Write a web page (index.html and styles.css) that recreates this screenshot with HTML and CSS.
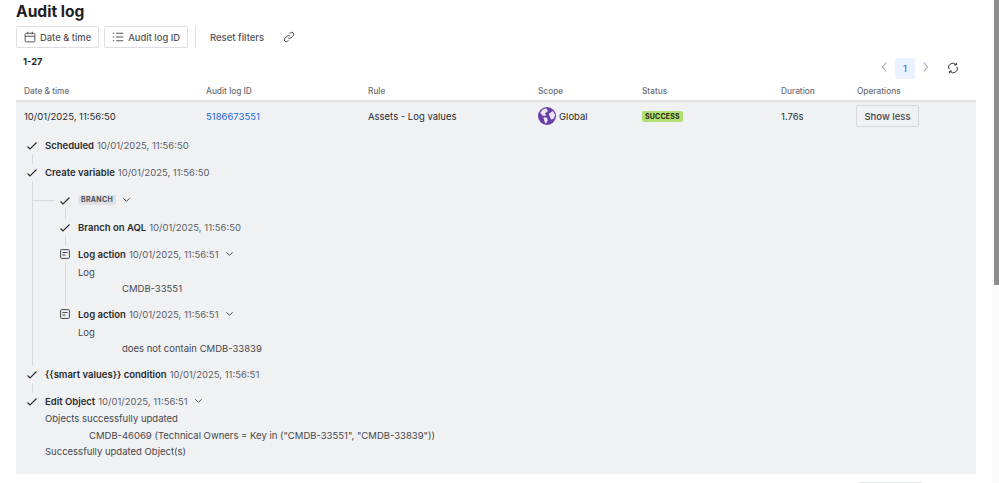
FILE: index.html
```html
<!DOCTYPE html>
<html lang="en">
<head>
<meta charset="utf-8">
<title>Audit log</title>
<link rel="stylesheet" href="styles.css">
</head>
<body>
<div class="scrollbar"><div class="thumb"></div></div>
<main class="page">
  <h1 class="title">Audit log</h1>
  <div class="filters">
    <button class="filter"><svg class="ico" viewBox="0 0 16 16"><rect x="1.500" y="3" width="13" height="11.500" rx="1.500"/><path d="M1.500 7h13M5 1v3.500M11 1v3.500"/></svg>Date &amp; time</button>
    <button class="filter"><svg class="ico" viewBox="0 0 16 16"><path d="M5.500 3H15M5.500 8H15M5.500 13H15M1 3h2M1 8h2M1 13h2"/></svg>Audit log ID</button>
    <span class="divider"></span>
    <span class="reset">Reset filters</span>
    <svg class="ico link" viewBox="0 0 16 16"><path d="M6.800 9.200a2.600 2.600 0 0 0 3.700 0l3-3a2.600 2.600 0 0 0-3.700-3.700l-1 1M9.200 6.800a2.600 2.600 0 0 0-3.700 0l-3 3a2.600 2.600 0 0 0 3.700 3.700l1-1"/></svg>
  </div>
  <div class="toolbar">
    <span class="count">1-27</span>
    <div class="pager">
      <svg class="chev" viewBox="0 0 10 14"><path d="M7 2 2.500 7 7 12"/></svg>
      <span class="pagenum">1</span>
      <svg class="chev" viewBox="0 0 10 14"><path d="M3 2l4.500 5L3 12"/></svg>
      <svg class="refresh" viewBox="0 0 16 16"><path d="M2.500 9.500a5.700 5.700 0 0 1 9.500-6M13.500 6.500a5.700 5.700 0 0 1-9.500 6M12.500 1v3h-3M3.500 15v-3h3"/></svg>
    </div>
  </div>
  <div class="cols head">
    <span>Date &amp; time</span><span>Audit log ID</span><span>Rule</span><span>Scope</span><span>Status</span><span>Duration</span><span>Operations</span>
  </div>
  <section class="expanded">
    <div class="cols row">
      <span>10/01/2025, 11:56:50</span>
      <a class="idlink">5186673551</a>
      <span>Assets - Log values</span>
      <span class="scope"><svg class="globe" viewBox="0 0 20 20"><circle cx="10" cy="10" r="10" fill="#6a3fa8"/><path fill="#ece6f6" d="M5 3 9 1.500 11 4.500 8 7 9 10 5 9.500 2.500 6.500ZM12 7.500l4.500-3 2.500 4.500-1.500 4-3 1-1.500-3.500ZM6 11.500l4 .5 1 3-2.500 3.500-1.500-3Z"/></svg>Global</span>
      <span><span class="lozenge">SUCCESS</span></span>
      <span>1.76s</span>
      <span><button class="less">Show less</button></span>
    </div>
    <div class="tree">
      <div class="step"><svg class="tick" viewBox="0 0 10 8"><path d="M.5 4.500 3 7 9.500.5"/></svg><b>Scheduled</b><span class="time">10/01/2025, 11:56:50</span></div>
      <div class="vline"></div>
      <div class="step"><svg class="tick" viewBox="0 0 10 8"><path d="M.5 4.500 3 7 9.500.5"/></svg><b>Create variable</b><span class="time">10/01/2025, 11:56:50</span></div>
      <div class="branch">
        <div class="step"><span class="hline"></span><svg class="tick" viewBox="0 0 10 8"><path d="M.5 4.500 3 7 9.500.5"/></svg><span class="tag">BRANCH</span><svg class="caret" viewBox="0 0 10 6"><path d="M1.500 1 5 4.500 8.500 1"/></svg></div>
        <div class="vline"></div>
        <div class="step"><svg class="tick" viewBox="0 0 10 8"><path d="M.5 4.500 3 7 9.500.5"/></svg><b>Branch on AQL</b><span class="time">10/01/2025, 11:56:50</span></div>
        <div class="vline"></div>
        <div class="step"><svg class="doc" viewBox="0 0 10 10"><rect x=".6" y=".6" width="8.800" height="8.800" rx="1"/><path d="M2.500 3.500h5M2.500 6h3"/></svg><b>Log action</b><span class="time">10/01/2025, 11:56:51</span><svg class="caret" viewBox="0 0 10 6"><path d="M1.500 1 5 4.500 8.500 1"/></svg></div>
        <div class="detail ruled">
          <div>Log</div>
          <div class="deep">CMDB-33551</div>
        </div>
        <div class="step"><svg class="doc" viewBox="0 0 10 10"><rect x=".6" y=".6" width="8.800" height="8.800" rx="1"/><path d="M2.500 3.500h5M2.500 6h3"/></svg><b>Log action</b><span class="time">10/01/2025, 11:56:51</span><svg class="caret" viewBox="0 0 10 6"><path d="M1.500 1 5 4.500 8.500 1"/></svg></div>
        <div class="detail">
          <div>Log</div>
          <div class="deep">does not contain CMDB-33839</div>
        </div>
      </div>
      <div class="step"><svg class="tick" viewBox="0 0 10 8"><path d="M.5 4.500 3 7 9.500.5"/></svg><b>{{smart values}} condition</b><span class="time">10/01/2025, 11:56:51</span></div>
      <div class="vline"></div>
      <div class="step"><svg class="tick" viewBox="0 0 10 8"><path d="M.5 4.500 3 7 9.500.5"/></svg><b>Edit Object</b><span class="time">10/01/2025, 11:56:51</span><svg class="caret" viewBox="0 0 10 6"><path d="M1.500 1 5 4.500 8.500 1"/></svg></div>
      <div class="detail closing">
        <div>Objects successfully updated</div>
        <div class="deep">CMDB-46069 (Technical Owners = Key in ("CMDB-33551", "CMDB-33839"))</div>
        <div>Successfully updated Object(s)</div>
      </div>
    </div>
  </section>
  <div class="next"><span class="more"></span></div>
</main>
</body>
</html>
```
FILE: styles.css
```css
* { box-sizing: border-box; }
html, body { margin: 0; height: 483px; overflow: hidden; background: #fff; }
body { font-family: Inter, "Liberation Sans", sans-serif; font-size: 9.5px; color: #292a2e; }
.page { width: 992px; padding: 0 16px; }
.title { margin: 0 0 3px; padding-top: 1px; font-size: 15.6px; line-height: 22px; font-weight: 700; color: #1f2023; }
.filters { display: flex; align-items: center; height: 22px; }
.filter { display: flex; align-items: center; gap: 4px; height: 22px; padding: 0 7px; margin-right: 5px; background: #fff; border: 1px solid #dcdfe4; border-radius: 2px; font: 500 9.4px Inter, sans-serif; color: #505258; }
.ico { width: 12px; height: 12px; fill: none; stroke: #505258; stroke-width: 1.300; }
.divider { width: 1px; height: 22px; margin: 0 14px 0 2px; background: #dcdfe4; }
.reset { font-weight: 500; font-size: 9.5px; color: #505258; }
.link { margin-left: 19px; stroke: #3b3d42; }
.toolbar { display: flex; justify-content: space-between; height: 33px; }
.count { padding: 7px 0 0 7px; font-weight: 700; font-size: 9.300px; line-height: 14px; color: #292a2e; }
.pager { display: flex; align-items: flex-start; padding: 10px 17px 0 0; }
.pagenum { width: 20px; height: 21px; margin: 0 6px; border-radius: 2px; background: #e9f2fe; color: #1868db; font-size: 9.500px; line-height: 21px; text-align: center; }
.chev { width: 9px; height: 12px; margin-top: 3px; fill: none; stroke: #a3a6ad; stroke-width: 1.200; }
.refresh { width: 12px; height: 12px; margin: 4px 0 0 17px; fill: none; stroke: #2e3035; stroke-width: 1.300; }
.cols { display: grid; grid-template-columns: 182px 162px 170px 104px 139px 76px 1fr; padding-left: 8px; align-items: center; }
.head { height: 21px; padding-top: 1px; border-bottom: 2px solid #dfe1e5; font-size: 8.300px; font-weight: 500; color: #6b6e76; }
.expanded { background: #f0f1f3; height: 372px; }
.row { height: 28px; }
.idlink { color: #1868db; }
.scope { display: flex; align-items: center; gap: 3px; }
.globe { width: 18px; height: 18px; }
.lozenge { display: inline-block; padding: 0 3px; border-radius: 2px; background: #b3df72; color: #1f2d0c; font-size: 7px; font-weight: 700; line-height: 11px; letter-spacing: .2px; vertical-align: middle; }
.less { display: block; height: 22px; width: 63px; margin-left: -1px; padding: 0; background: #f0f1f3; border: 1px solid #d5d7dc; border-radius: 2px; font: 500 9.500px Inter, sans-serif; color: #45474d; }
.tree { padding: 6.500px 0 0 11px; }
.step { display: flex; align-items: center; height: 17px; position: relative; white-space: nowrap; }
.step b { font-weight: 600; color: #292a2e; font-size: 9.500px; }
.time { margin-left: 3px; color: #5b5e66; font-size: 9.500px; }
.tick { flex: none; width: 10px; height: 8px; margin: 2px 8px 0 0; fill: none; stroke: #292a2e; stroke-width: 1.100; }
.doc { flex: none; width: 10px; height: 10px; margin-right: 8px; fill: none; stroke: #44464c; stroke-width: 1; }
.caret { flex: none; width: 9px; height: 6px; margin-left: 6px; fill: none; stroke: #44464c; stroke-width: 1.100; }
.vline { width: 1px; height: 10.250px; margin-left: 5px; background: #d5d7db; }
.branch { margin-left: 5px; padding: 10.500px 0 8px 27px; border-left: 1px solid #d5d7db; }
.hline { position: absolute; left: -27px; top: 8.500px; width: 22px; height: 1px; background: #d5d7db; }
.tag { padding: 0 3px; background: #dfe1e5; border-radius: 2px; font-size: 7px; font-weight: 700; line-height: 10px; color: #505258; letter-spacing: .3px; }
.detail { padding: 2.500px 0 0 18px; color: #45474d; font-size: 9.500px; line-height: 16.200px; }
.closing { padding-top: 1.500px; }
.deep { padding-left: 44px; }
.ruled { margin-left: 5px; padding: 2.500px 0 8.100px 12px; border-left: 1px solid #d5d7db; }
.next { margin-top: 8px; padding-left: 841px; }
.more { display: block; width: 66px; height: 22px; background: #fff; border: 1px solid #e3e4e7; border-radius: 2px; }
.scrollbar { position: absolute; top: 0; right: 0; bottom: 0; width: 7px; background: #fbfbfb; }
.thumb { height: 285px; margin-left: 2px; background: #8d8d8d; }
```
